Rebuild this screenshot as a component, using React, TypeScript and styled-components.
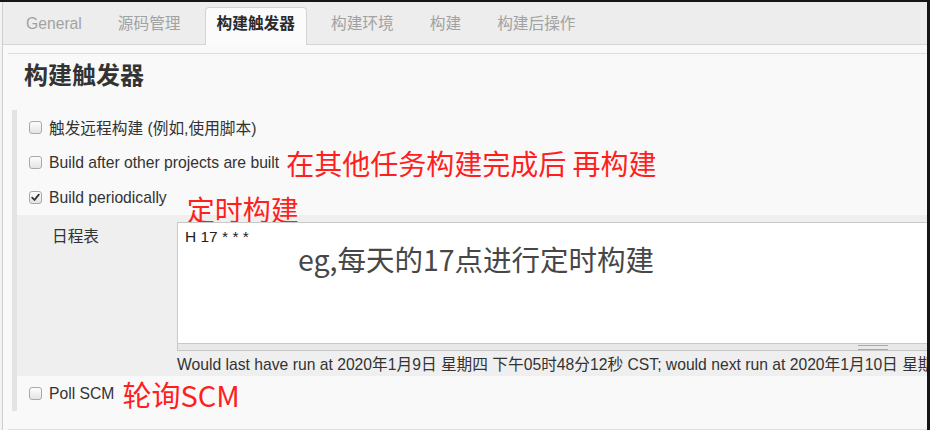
import React from "react";
import styled, { createGlobalStyle } from "styled-components";

const Global = createGlobalStyle`
  html, body { margin: 0; padding: 0; background: #f9f9f9; }
  body { font-family: "Liberation Sans", "Noto Sans CJK SC", sans-serif; }
`;

const Page = styled.div`
  position: relative;
  width: 930px;
  height: 430px;
  box-sizing: border-box;
  border-top: 2px solid #161616;
  border-right: 3px solid #161616;
  padding-left: 2px;
  background: #f3f3f3;
  overflow: hidden;
`;

const Frame = styled.div`
  height: 100%;
  border-left: 1px solid #cfcfcf;
  background: #f9f9f9;
  display: flex;
  flex-direction: column;
`;

const TabBar = styled.div`
  height: 43px;
  box-sizing: border-box;
  background: #ededed;
  border-bottom: 1px solid #d6d6d6;
  display: flex;
  align-items: flex-end;
  gap: 12px;
  padding-left: 11px;
`;

const Tab = styled.div<{ $active?: boolean }>`
  height: 38px;
  box-sizing: border-box;
  padding: 6px 11px 0;
  margin-bottom: -1px;
  line-height: 20px;
  font-size: 15.7px;
  white-space: nowrap;
  border: 1px solid ${(p) => (p.$active ? "#d2d2d2" : "transparent")};
  border-bottom: none;
  border-radius: 4px 4px 0 0;
  background: ${(p) => (p.$active ? "#fbfbfb" : "transparent")};
  color: ${(p) => (p.$active ? "#2b2b2b" : "#a2a2a2")};
  font-weight: ${(p) => (p.$active ? 700 : 400)};
`;

const Rule = styled.div<{ $top: number }>`
  margin: ${(p) => p.$top}px 0 0 5px;
  border-top: 1px solid #dedede;
`;

const Heading = styled.h1`
  margin: 7px 0 0 21px;
  font-size: 24px;
  line-height: 30px;
  font-weight: 700;
  color: #333;
`;

const Section = styled.div`
  margin: 19px 0 0 9px;
  border-left: 5px solid #e3e3e3;
  display: flex;
  flex-direction: column;
`;

const Row = styled.div`
  height: 35px;
  display: flex;
  align-items: center;
  gap: 7px;
  padding-left: 12px;
  font-size: 15.7px;
  color: #333;
  white-space: nowrap;
`;

const Box = styled.span`
  width: 13px;
  height: 13px;
  flex: none;
  box-sizing: border-box;
  border: 1px solid #a9a9a9;
  border-radius: 3px;
  background: linear-gradient(#fdfdfd, #e4e4e4);
  display: flex;
  align-items: center;
  justify-content: center;
`;

const Red = styled.span<{ $gap?: number; $drop?: number; $size?: number }>`
  position: relative;
  top: ${(p) => p.$drop ?? 0}px;
  margin-left: ${(p) => p.$gap ?? 0}px;
  font-family: "Noto Sans CJK SC", "Liberation Sans", sans-serif;
  font-size: ${(p) => p.$size ?? 28}px;
  line-height: 28px;
  color: #ff1f1f;
`;

const Schedule = styled.div`
  background: #efefef;
  padding: 7px 0 3px;
  display: grid;
  grid-template-columns: 160px 1fr;
`;

const Label = styled.div`
  padding-left: 35px;
  line-height: 30px;
  font-size: 15.7px;
  color: #333;
`;

const Field = styled.div`
  display: flex;
  flex-direction: column;
  min-width: 0;
`;

const Editor = styled.div`
  position: relative;
  height: 122px;
  margin-right: -20px;
  box-sizing: border-box;
  border: 1px solid #c9c9c9;
  background: #fff;
  padding: 6px 7px;
  font-size: 15.5px;
  line-height: 16px;
  color: #222;
`;

const Note = styled.span`
  position: absolute;
  left: 120px;
  top: 22px;
  font-family: "Noto Sans CJK SC", "Liberation Sans", sans-serif;
  font-size: 28.5px;
  line-height: 28px;
  color: #474747;
  white-space: nowrap;
`;

const Handle = styled.div`
  height: 7px;
  margin-right: -20px;
  box-sizing: border-box;
  background: #e8e8e8;
  border: 1px solid #c6c6c6;
  border-top: none;
  display: flex;
  align-items: center;
  padding-left: 680px;
`;

const Grip = styled.span`
  width: 30px;
  height: 3px;
  border-top: 1px solid #a8a8a8;
  border-bottom: 1px solid #a8a8a8;
`;

const Help = styled.div`
  margin-top: 6px;
  line-height: 16px;
  font-size: 15.7px;
  color: #333;
  white-space: nowrap;
`;

const Watermarks = styled.div`
  position: absolute;
  inset: 0;
  pointer-events: none;
  z-index: 5;
`;

const Mark = styled.span`
  position: absolute;
  font-family: "Liberation Sans", sans-serif;
  font-size: 28px;
  line-height: 30px;
  color: rgba(0, 0, 0, 0.025);
  white-space: nowrap;
`;

const Check = () => (
  <svg width="9" height="9" viewBox="0 0 9 9">
    <path d="M1.2 4.6 L3.5 7 L7.8 1.6" fill="none" stroke="#333" strokeWidth="1.8" strokeLinecap="round" strokeLinejoin="round" />
  </svg>
);

const CheckBox = ({ checked }: { checked?: boolean }) => <Box>{checked ? <Check /> : null}</Box>;

const tabs = ["General", "源码管理", "构建触发器", "构建环境", "构建", "构建后操作"];
const markXs = [89, 236, 383, 530, 677, 824];
const markYs = [33, 130, 228, 326, 424];

export default function App() {
  return (
    <>
      <Global />
      <Page>
        <Frame>
          <TabBar>
            {tabs.map((t) => (
              <Tab key={t} $active={t === "构建触发器"}>
                {t}
              </Tab>
            ))}
          </TabBar>
          <Rule $top={8} />
          <Heading>构建触发器</Heading>
          <Section>
            <Row>
              <CheckBox />
              <span>触发远程构建 (例如,使用脚本)</span>
            </Row>
            <Row>
              <CheckBox />
              <span>Build after other projects are built</span>
              <Red>在其他任务构建完成后 再构建</Red>
            </Row>
            <Row>
              <CheckBox checked />
              <span>Build periodically</span>
              <Red $gap={13} $drop={11}>定时构建</Red>
            </Row>
            <Schedule>
              <Label>日程表</Label>
              <Field>
                <Editor>
                  H 17 * * *
                  <Note>eg,每天的17点进行定时构建</Note>
                </Editor>
                <Handle>
                  <Grip />
                </Handle>
                <Help>
                  Would last have run at 2020年1月9日 星期四 下午05时48分12秒 CST; would next run at 2020年1月10日 星期五 下午05时48分12秒 CST.
                </Help>
              </Field>
            </Schedule>
            <Row>
              <CheckBox />
              <span>Poll SCM</span>
              <Red $gap={1} $size={29}>轮询SCM</Red>
            </Row>
          </Section>
          <Rule $top={18} />
        </Frame>
        <Watermarks>
          {markYs.map((y) =>
            markXs.map((x) => (
              <Mark key={`${x}-${y}`} style={{ left: x, top: y - 15 }}>
                na.qiu
              </Mark>
            ))
          )}
        </Watermarks>
      </Page>
    </>
  );
}
